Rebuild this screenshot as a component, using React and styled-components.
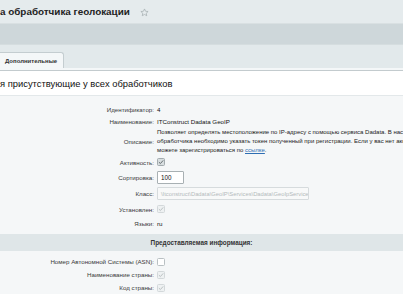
import React from "react";
import styled, { createGlobalStyle } from "styled-components";

const Global = createGlobalStyle`
  html, body { margin: 0; padding: 0; overflow: hidden; }
  body { font-family: "Liberation Sans", Arial, sans-serif; background: #f5f7f8; width: 403px; height: 294px; }
`;

const Page = styled.div`
  width: 403px;
  height: 294px;
  overflow: hidden;
  display: flex;
  flex-direction: column;
`;

const TitleBar = styled.div`
  height: 23px;
  background: #e5ebed;
  display: flex;
  align-items: center;
  gap: 10px;
  white-space: nowrap;
`;

const Title = styled.h1`
  margin: 0;
  font-size: 9.9px;
  font-weight: bold;
  color: #222;
`;

const Star = styled.svg`
  width: 9px;
  height: 9px;
  margin-top: 1px;
`;

const Toolbar = styled.div`
  height: 22px;
  background: #ced7da;
  border-top: 1px solid #d9e0e2;
  border-bottom: 1px solid #d5dddf;
  box-sizing: border-box;
`;

const TabsBar = styled.div`
  height: 23px;
  background: #e2e9eb;
  display: flex;
  align-items: flex-end;
`;

const Tab = styled.div`
  height: 16px;
  width: 64px;
  box-sizing: border-box;
  background: #f4f7f8;
  border: 1px solid #c4cdd0;
  border-left: none;
  border-bottom: none;
  border-top-right-radius: 3px;
  display: flex;
  align-items: center;
  padding-left: 5px;
  font-size: 6px;
  font-weight: bold;
  color: #333;
  white-space: nowrap;
`;

const Divider = styled.div`
  height: 2px;
  background: #f4f7f8;
  border-bottom: 1px solid #c3cbce;
`;

const Heading = styled.div`
  height: 24px;
  background: #fff;
  border-bottom: 1px solid #e3e8ea;
  display: flex;
  align-items: center;
  font-size: 9.4px;
  color: #111;
  white-space: nowrap;
`;

const Form = styled.div`
  background: #f5f7f8;
  padding-top: 7px;
  display: flex;
  flex-direction: column;
`;

const Row = styled.div`
  display: grid;
  grid-template-columns: 154px 1fr;
  column-gap: 3px;
  align-items: center;
  min-height: ${(p) => p.h || 12}px;
  font-size: 6.2px;
  white-space: nowrap;
`;

const Label = styled.div`
  text-align: right;
  color: #3a3a3a;
`;

const Value = styled.div`
  color: #111;
`;

const Desc = styled.div`
  color: #222;
  line-height: 9px;
  font-size: 6px;
  a { color: #2e6eb3; text-decoration: underline; }
`;

const Input = styled.div`
  box-sizing: border-box;
  height: ${(p) => p.h || 13}px;
  width: ${(p) => p.w}px;
  border: 1px solid ${(p) => (p.disabled ? "#d6dbdd" : "#a8b0b3")};
  border-radius: 1px;
  background: ${(p) => (p.disabled ? "#f8f9f9" : "#fff")};
  color: ${(p) => (p.disabled ? "#b4babc" : "#111")};
  font-size: ${(p) => (p.disabled ? 5.8 : 6.3)}px;
  display: flex;
  align-items: center;
  padding-left: 3px;
  overflow: hidden;
`;

const Box = styled.div`
  width: 8px;
  height: 8px;
  box-sizing: border-box;
  border-radius: 1.5px;
  border: 1px solid ${(p) => (p.state === "on" ? "#a3abae" : p.state === "dis" ? "#d3d8da" : "#b9c0c3")};
  background: ${(p) => (p.state === "on" ? "#d8dee0" : p.state === "dis" ? "#eef1f2" : "#fff")};
  display: flex;
  align-items: center;
  justify-content: center;
  svg { width: 6px; height: 6px; }
`;

const Band = styled.div`
  height: 17px;
  margin-top: ${(p) => p.mt || 0}px;
  background: #dfe6e8;
  display: flex;
  align-items: center;
  justify-content: center;
  font-size: 6.4px;
  font-weight: bold;
  color: #333;
`;

const Lower = styled.div`
  background: #f5f7f8;
  padding-top: 4px;
  display: flex;
  flex-direction: column;
`;

function Check({ state }) {
  const color = state === "on" ? "#5f686b" : "#b8bec0";
  return (
    <Box state={state}>
      {state !== "off" && (
        <svg viewBox="0 0 10 10">
          <path d="M1.5 5.2 L4 7.6 L8.6 2.4" fill="none" stroke={color} strokeWidth="1.6" />
        </svg>
      )}
    </Box>
  );
}

export default function App() {
  return (
    <Page>
      <Global />
      <TitleBar>
        <Title>а обработчика геолокации</Title>
        <Star viewBox="0 0 24 24">
          <path
            d="M12 2.5l2.9 6.2 6.7.7-5 4.6 1.4 6.6L12 17.2l-6 3.4 1.4-6.6-5-4.6 6.7-.7z"
            fill="none"
            stroke="#a6afb2"
            strokeWidth="2"
            strokeLinejoin="round"
          />
        </Star>
      </TitleBar>
      <Toolbar />
      <TabsBar>
        <Tab>Дополнительные</Tab>
      </TabsBar>
      <Divider />
      <Heading>я присутствующие у всех обработчиков</Heading>
      <Form>
        <Row h={12}>
          <Label>Идентификатор:</Label>
          <Value>4</Value>
        </Row>
        <Row h={13}>
          <Label>Наименование:</Label>
          <Value>ITConstruct Dadata GeoIP</Value>
        </Row>
        <Row h={26}>
          <Label>Описание:</Label>
          <Desc>
            Позволяет определять местоположение по IP-адресу с помощью сервиса Dadata. В настройках
            <br />
            обработчика необходимо указать токен полученный при регистрации. Если у вас нет аккаунта, то вы
            <br />
            можете зарегистрироваться по <a href="#">ссылке</a>.
          </Desc>
        </Row>
        <Row h={14}>
          <Label>Активность:</Label>
          <Check state="on" />
        </Row>
        <Row h={16}>
          <Label>Сортировка:</Label>
          <Input w={27}>100</Input>
        </Row>
        <Row h={17}>
          <Label>Класс:</Label>
          <Input w={152} h={13} disabled>
            \Itconstruct\Dadata\GeoIP\Services\Dadata\GeoIpService
          </Input>
        </Row>
        <Row h={14}>
          <Label>Установлен:</Label>
          <Check state="dis" />
        </Row>
        <Row h={14}>
          <Label>Языки:</Label>
          <Value>ru</Value>
        </Row>
      </Form>
      <Band mt={4}>Предоставляемая информация:</Band>
      <Lower>
        <Row h={13}>
          <Label>Номер Автономной Системы (ASN):</Label>
          <Check state="off" />
        </Row>
        <Row h={13}>
          <Label>Наименование страны:</Label>
          <Check state="dis" />
        </Row>
        <Row h={13}>
          <Label>Код страны:</Label>
          <Check state="dis" />
        </Row>
      </Lower>
    </Page>
  );
}
